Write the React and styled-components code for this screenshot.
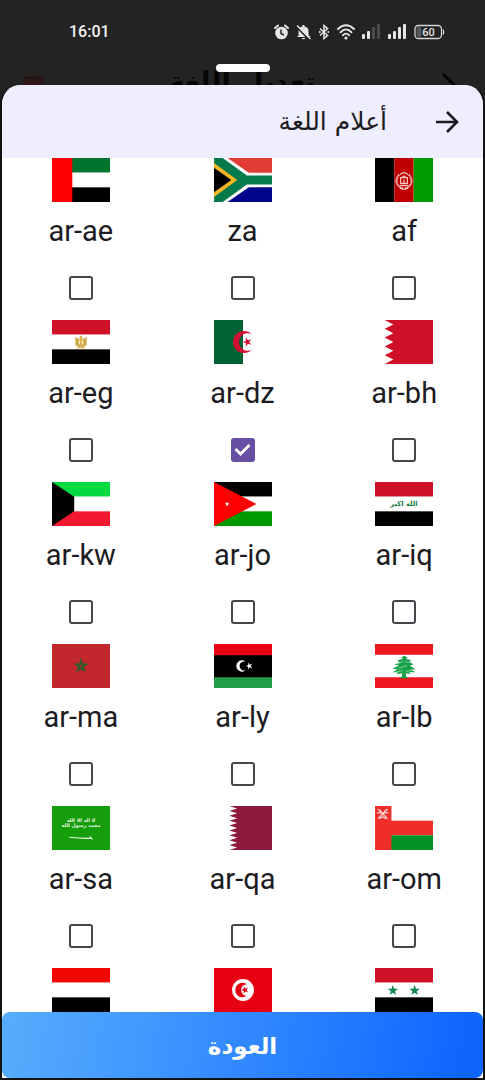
import React from "react";
import styled, { createGlobalStyle } from "styled-components";

const GlobalStyle = createGlobalStyle`
  * { box-sizing: border-box; }
  body {
    margin: 0;
    background: #232324;
    font-family: Roboto, "DejaVu Sans", sans-serif;
  }
`;

const Screen = styled.div`
  display: flex;
  flex-direction: column;
  height: 100vh;
  background: #232324;
`;

const TopArea = styled.div`
  position: relative;
  flex: none;
  height: 85px;
  overflow: hidden;
`;

const StatusBar = styled.div`
  display: flex;
  align-items: center;
  justify-content: space-between;
  height: 64px;
  padding: 0 40px 0 69px;
`;

const Clock = styled.time`
  color: #f1f1f1;
  font: 500 16px/20px Roboto, sans-serif;
`;

const StatusIcons = styled.div`
  display: flex;
  align-items: center;
  gap: 7px;
  color: #e6e6e6;
  svg { display: block; fill: currentColor; }
`;

const Handle = styled.div`
  position: relative;
  width: 54px;
  height: 8px;
  margin: 0 auto;
  border-radius: 4px;
  background: #fff;
`;

const DimmedBar = styled.div`
  position: absolute;
  top: 66px;
  left: 0;
  right: 0;
  display: flex;
  align-items: flex-start;
  justify-content: space-between;
  padding: 0 26px 0 23px;
  svg { display: block; margin-top: 6px; }
`;

const DimmedTitle = styled.div`
  color: #050505;
  font: bold 27px/32px "DejaVu Sans", sans-serif;
`;

const Sheet = styled.main`
  display: flex;
  flex: 1;
  flex-direction: column;
  min-height: 0;
  overflow: hidden;
  border: 2px solid #121213;
  border-top: 0;
  border-radius: 20px 20px 0 0;
  background: #fff;
`;

const SheetHeader = styled.header`
  display: flex;
  flex: none;
  align-items: center;
  gap: 48px;
  height: 73px;
  padding: 0 24px;
  background: #eeeeff;
`;

const BackButton = styled.button`
  display: block;
  padding: 0;
  border: 0;
  background: none;
  svg { display: block; }
`;

const Title = styled.h1`
  margin: 0;
  color: #1c1b22;
  font: 400 25px/32px "DejaVu Sans", sans-serif;
`;

const FlagGrid = styled.div`
  display: grid;
  flex: 1;
  grid-template-columns: repeat(3, 1fr);
  align-content: start;
  min-height: 0;
  margin: 0 -2px;
  overflow-y: auto;
  scrollbar-width: none;
`;

const Option = styled.label`
  display: flex;
  flex-direction: column;
  align-items: center;
  padding-bottom: ${(p) => (p.$last ? 0 : 20)}px;
  svg { display: block; width: 58px; height: 44px; }
`;

const Code = styled.span`
  margin: 11px 0 27px;
  color: #1c1b1f;
  font-size: 29px;
  line-height: 36px;
`;

const Checkbox = styled.input`
  display: block;
  position: relative;
  appearance: none;
  width: 24px;
  height: 24px;
  margin: 0;
  border: 2px solid #48464c;
  border-radius: 3px;
  &:checked {
    border-color: #6750a4;
    background: #6750a4;
  }
  &:checked::after {
    content: "";
    position: absolute;
    inset: 0;
    background: #fff;
    clip-path: polygon(2px 10px, 4px 8px, 8px 12px, 16px 4px, 18px 6px, 8px 16px);
  }
`;

const ReturnButton = styled.button`
  flex: none;
  height: 66px;
  padding: 2px 0 0;
  border: 0;
  border-radius: 8px;
  background: linear-gradient(100deg, #56aefb 0%, #3d94ff 35%, #0f66ff 95%);
  color: #fff;
  font: bold 23px/32px "DejaVu Sans", sans-serif;
`;

const starPoints = (cx, cy, r, turn = -90) =>
  Array.from({ length: 10 }, (_, i) => {
    const radius = i % 2 ? r * 0.382 : r;
    const a = ((turn + i * 36) * Math.PI) / 180;
    return `${cx + radius * Math.cos(a)},${cy + radius * Math.sin(a)}`;
  }).join(" ");

const Star = ({ x, y, r, fill, turn }) => <polygon points={starPoints(x, y, r, turn)} fill={fill} />;

const Stripes = ({ colors }) =>
  colors.map((c, i) => <rect key={i} y={i * 15} width="60" height="15" fill={c} />);

const serrated = (x, depth, teeth) => {
  const step = 45 / teeth;
  let d = `M60 0H${x}`;
  for (let i = 0; i < teeth; i++) {
    d += `L${x + depth} ${(i + 0.5) * step}L${x} ${(i + 1) * step}`;
  }
  return `${d}H60Z`;
};

const flags = {
  af: (
    <>
      <rect width="20" height="45" />
      <rect x="20" width="20" height="45" fill="#be0000" />
      <rect x="40" width="20" height="45" fill="#009a00" />
      <g fill="none" stroke="#f3c9c4">
        <path d="M25 17c-5 6-3 12 4 14M35 17c5 6 3 12-4 14" strokeWidth="2" strokeDasharray="1.6 .5" />
        <path d="M26 28h8M25.500 30.500q4.500 3 9 0M26 17q4-4 8 0" strokeWidth="1.300" />
        <path d="M26.500 26v-6h7v6zM28 20q2-3 4 0M30 26v-4" strokeWidth="1.200" />
      </g>
    </>
  ),
  za: (
    <>
      <rect width="60" height="45" fill="#fff" />
      <path d="M14 0H60V15H36Z" fill="#e23d34" />
      <path d="M14 45H60V30H36Z" fill="#00078c" />
      <path d="M0 0H9L34 18H60V27H34L9 45H0Z" fill="#057b4b" />
      <path d="M0 5L24 22.500L0 40Z" fill="#fcb822" />
      <path d="M0 10L18 22.500L0 35Z" />
    </>
  ),
  "ar-ae": (
    <>
      <Stripes colors={["#00732f", "#fff", "#000"]} />
      <rect width="21" height="45" fill="#f00" />
    </>
  ),
  "ar-bh": (
    <>
      <rect width="60" height="45" fill="#fff" />
      <path d="M60 0H10L19 4.500L10 9L19 13.500L10 18L19 22.500L10 27L19 31.500L10 36L19 40.500L10 45H60Z" fill="#ce1126" />
    </>
  ),
  "ar-dz": (
    <>
      <rect width="60" height="45" fill="#fff" />
      <rect width="30" height="45" fill="#006233" />
      <path d="M39 14.500A11.300 11.300 0 1 0 39 30.500A9 9 0 1 1 39 14.500Z" fill="#d21034" />
      <Star x={34.500} y={22.500} r={5} fill="#d21034" turn={180} />
    </>
  ),
  "ar-eg": (
    <>
      <Stripes colors={["#ce1126", "#fff", "#000"]} />
      <path d="M24 17l4 3 1-4h2l1 4 4-3v9l-3 1 2 2H25l2-2-3-1Z" fill="#dcb75b" />
      <path d="M26 19v7M34 19v7M28.500 22v5M31.500 22v5" stroke="#b28b36" strokeWidth=".8" />
      <path d="M28 21h1v4h-1M31 21h1v4h-1" fill="#fff4d6" />
    </>
  ),
  "ar-iq": (
    <>
      <Stripes colors={["#ce1126", "#fff", "#000"]} />
      <text x="30" y="25" fill="#177b4a" fontSize="7" fontWeight="700" fontFamily="DejaVu Sans, sans-serif" textAnchor="middle">
        الله اكبر
      </text>
    </>
  ),
  "ar-jo": (
    <>
      <Stripes colors={["#000", "#fff", "#090"]} />
      <path d="M0 0L44 22.500L0 45Z" fill="#f00" />
      <Star x={13.500} y={22.500} r={2.600} fill="#fff" />
    </>
  ),
  "ar-kw": (
    <>
      <Stripes colors={["#00d941", "#fff", "#f31830"]} />
      <path d="M0 0L23 15V30L0 45Z" />
    </>
  ),
  "ar-lb": (
    <>
      <rect width="60" height="45" fill="#fff" />
      <rect width="60" height="11" fill="#ee161f" />
      <rect y="34" width="60" height="11" fill="#ee161f" />
      <path
        d="M30 12l4 2-2 1 6 2-3 1 5 3-4 1 6 4-5 0 5 3-7 0 2 2-5-1v3l3 2h-10l3-2v-3l-6 1 2-2-6 0 5-3-5-1 7-3-5-1 6-2-3-2 6-2-2-1Z"
        fill="#16a34a"
      />
      <path d="M23 20l6-2M24 25l9-3M21 29l8-2M32 28l6-1M31 18l4 1" stroke="#b7e2c4" strokeWidth=".7" />
    </>
  ),
  "ar-ly": (
    <>
      <rect width="60" height="45" />
      <rect width="60" height="11.500" fill="#e70013" />
      <rect y="34" width="60" height="11" fill="#239e46" />
      <path d="M32.500 18A5.800 5.800 0 1 0 32.500 27A4.700 4.700 0 1 1 32.500 18Z" fill="#fff" />
      <Star x={36.500} y={22.500} r={3.800} fill="#fff" turn={180} />
    </>
  ),
  "ar-ma": (
    <>
      <rect width="60" height="45" fill="#c1272d" />
      <polygon
        points={[0, 2, 4, 1, 3]
          .map((k) => {
            const a = ((-90 + k * 72) * Math.PI) / 180;
            return `${30 + 6 * Math.cos(a)},${22.5 + 6 * Math.sin(a)}`;
          })
          .join(" ")}
        fill="none"
        stroke="#2d5a2d"
        strokeWidth="1.600"
      />
    </>
  ),
  "ar-om": (
    <>
      <Stripes colors={["#fff", "#ef2d29", "#009025"]} />
      <rect width="17" height="45" fill="#ef2d29" />
      <path d="M3 3l10 10M13 3L3 13M2 7h12M5 13l3-2 3 2M5 4l2 3M11 4L9 7" fill="none" stroke="#fbd2cc" strokeWidth="1.300" />
    </>
  ),
  "ar-qa": (
    <>
      <rect width="60" height="45" fill="#fff" />
      <path d={serrated(16, 8, 9)} fill="#8d1b3d" />
    </>
  ),
  "ar-sa": (
    <>
      <rect width="60" height="45" fill="#159d0a" />
      <g fill="#e6f6e2" fontSize="5" fontWeight="700" fontFamily="DejaVu Sans, sans-serif" textAnchor="middle">
        <text x="30" y="16">لا اله الا الله</text>
        <text x="30" y="22">محمد رسول الله</text>
      </g>
      <path d="M18 32q12 1.500 23 1M39 31.500l3 2.500" fill="none" stroke="#eaf7e8" strokeWidth="1.200" />
    </>
  ),
  sy: (
    <>
      <Stripes colors={["#ce1126", "#fff", "#000"]} />
      <Star x={18.500} y={23} r={5.800} fill="#11864f" />
      <Star x={41} y={23} r={5.800} fill="#11864f" />
    </>
  ),
  tn: (
    <>
      <rect width="60" height="45" fill="#e70013" />
      <circle cx="30" cy="22.500" r="11.300" fill="#fff" />
      <path d="M34 16.500A7.500 7.500 0 1 0 34 28.500A6 6 0 1 1 34 16.500Z" fill="#e70013" />
      <Star x={32} y={22.500} r={4} fill="#e70013" turn={180} />
    </>
  ),
  ye: <Stripes colors={["#f10600", "#fff", "#000"]} />,
};

const options = [
  "af", "za", "ar-ae",
  "ar-bh", "ar-dz", "ar-eg",
  "ar-iq", "ar-jo", "ar-kw",
  "ar-lb", "ar-ly", "ar-ma",
  "ar-om", "ar-qa", "ar-sa",
];
const trailing = ["sy", "tn", "ye"];

const Flag = ({ id }) => (
  <svg viewBox="0 0 60 45" preserveAspectRatio="none" aria-hidden="true">
    {flags[id]}
  </svg>
);

const SignalIcon = ({ strength }) => (
  <svg width="19" height="16" viewBox="0 0 19 16">
    {[5, 8, 12, 15].map((h, i) => (
      <rect key={h} x={i * 5} y={15 - h} width="3" height={h} rx="1" opacity={i < strength ? 1 : 0.2} />
    ))}
  </svg>
);

const PhoneStatus = () => (
  <StatusIcons aria-hidden="true">
    <svg width="15" height="16" viewBox="0 0 15 16">
      <circle cx="7.500" cy="9" r="6.300" />
      <path d="M1 4L4 1.500M14 4L11 1.500" stroke="#e6e6e6" strokeWidth="2" strokeLinecap="round" />
      <path d="M7 5.500V9.500L10 11" style={undefined} stroke="#232324" strokeWidth="1.500" fillOpacity="0" />
    </svg>
    <svg width="15" height="16" viewBox="0 0 15 16">
      <path d="M2.500 12V7Q2.500 3 6.500 2.500V1h2v1.500Q12.500 3 12.500 7v4l2 2H.5Z" />
      <path d="M5.500 14h4q-2 2.500-4 0" />
      <path d="M0 2.500L13 15.500" stroke="#232324" strokeWidth="1.600" />
      <path d="M1 1.500L14.500 15" stroke="#e6e6e6" strokeWidth="1.400" />
    </svg>
    <svg width="12" height="16" viewBox="0 0 12 16">
      <path d="M2 4.500L9.500 11.500L6 14.500V1.500L9.500 4.500L2 11.500" fill="none" stroke="#e6e6e6" strokeWidth="1.500" />
      <path d="M1 7h1.500v2H1zM9.500 7H11v2H9.500z" />
    </svg>
    <svg width="18" height="16" viewBox="0 0 18 16">
      <g fill="none" stroke="#e6e6e6" strokeWidth="1.900" strokeLinecap="round">
        <path d="M1 5Q9-2.500 17 5M3.500 8.300Q9 2.500 14.500 8.300M6 11.200Q9 8 12 11.200" />
      </g>
      <circle cx="9" cy="14" r="1.600" />
    </svg>
    <SignalIcon strength={2} />
    <SignalIcon strength={4} />
    <svg width="31" height="16" viewBox="0 0 31 16">
      <rect x="1" y="1.500" width="26.500" height="13" rx="3.500" fill="none" stroke="#d5d5d5" strokeWidth="1.300" />
      <rect x="2.500" y="3" width="5" height="10" rx="2" fill="#58585a" />
      <path d="M29 5.500q1.500 2.500 0 5" stroke="#d5d5d5" strokeWidth="1.200" />
      <text x="14.500" y="12" fontSize="11" fontWeight="500" fontFamily="Roboto, sans-serif" textAnchor="middle">60</text>
    </svg>
  </StatusIcons>
);

export default function App() {
  return (
    <>
      <GlobalStyle />
      <Screen>
        <TopArea>
          <DimmedBar>
            <svg width="20" height="14" viewBox="0 0 20 14">
              <path d="M0 13V6Q10-1 20 6V13Z" fill="#301618" />
              <path d="M1 6H19" stroke="#211415" strokeWidth="2" />
            </svg>
            <DimmedTitle dir="rtl">تعديل اللغة</DimmedTitle>
            <svg width="18" height="18" viewBox="0 0 18 18">
              <path d="M2 2L16 16" stroke="#050505" strokeWidth="3" />
            </svg>
          </DimmedBar>
          <StatusBar>
            <Clock>16:01</Clock>
            <PhoneStatus />
          </StatusBar>
          <Handle />
        </TopArea>
        <Sheet dir="rtl">
          <SheetHeader>
            <BackButton type="button" aria-label="العودة">
              <svg width="24" height="24" viewBox="0 0 24 24" fill="none" stroke="#1c1b22" strokeWidth="2.600">
                <path d="M1 12H22M12 2L22 12L12 22" />
              </svg>
            </BackButton>
            <Title>أعلام اللغة</Title>
          </SheetHeader>
          <FlagGrid>
            {options.map((id) => (
              <Option key={id}>
                <Flag id={id} />
                <Code dir="ltr">{id}</Code>
                <Checkbox type="checkbox" defaultChecked={id === "ar-dz"} />
              </Option>
            ))}
            {trailing.map((id) => (
              <Option as="div" key={id} $last>
                <Flag id={id} />
              </Option>
            ))}
          </FlagGrid>
          <ReturnButton type="button">العودة</ReturnButton>
        </Sheet>
      </Screen>
    </>
  );
}
